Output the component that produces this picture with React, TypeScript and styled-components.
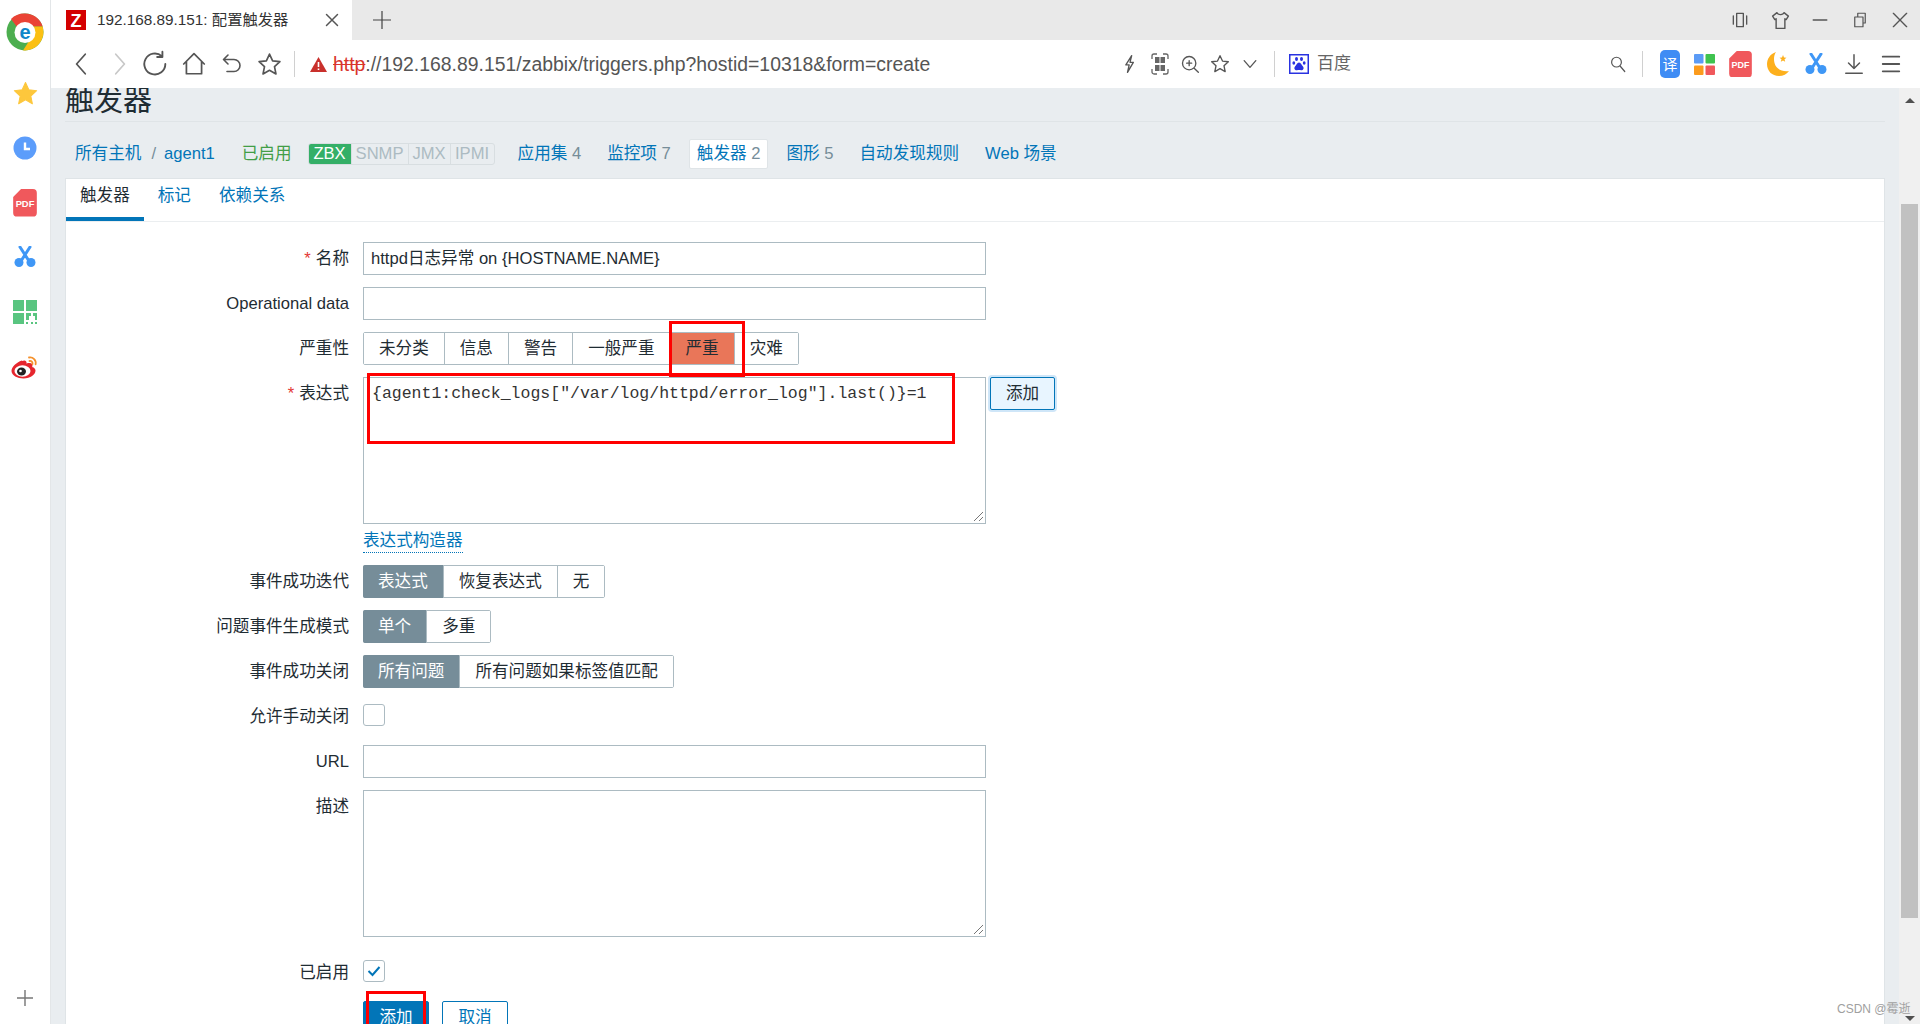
import styled, { createGlobalStyle } from 'styled-components';

const GlobalStyle = createGlobalStyle`
  html, body {
    margin: 0;
    padding: 0;
    height: 100%;
    overflow: hidden;
    background: #fff;
  }
  * {
    box-sizing: border-box;
  }
`;

const sans = `"Liberation Sans", "Noto Sans CJK SC", sans-serif`;

const Shell = styled.div`
  display: flex;
  width: 1920px;
  height: 1024px;
  overflow: hidden;
  font-family: ${sans};
  font-size: 16.6px;
  line-height: 20px;
  color: #1f2c33;
  position: relative;
`;
const SideBar = styled.aside`
  width: 51px;
  flex: none;
  background: #fff;
  border-right: 1px solid #e3e6e8;
  display: flex;
  flex-direction: column;
  align-items: center;
  padding-top: 13px;
`;
const SideIcon = styled.div<{ $h: number }>`
  height: ${(p) => p.$h}px;
  width: 100%;
  display: flex;
  align-items: center;
  justify-content: center;
`;
const SideBottom = styled.div`
  margin-top: auto;
  margin-bottom: 18px;
  display: flex;
`;
const Column = styled.div`
  flex: 1;
  min-width: 0;
  display: flex;
  flex-direction: column;
`;
const TabStrip = styled.div`
  height: 40px;
  flex: none;
  background: #e9e9e9;
  display: flex;
  align-items: center;
`;
const BrowserTab = styled.div`
  width: 301px;
  height: 40px;
  background: #fff;
  display: flex;
  align-items: center;
  padding-left: 15px;
  font-size: 15.3px;
  color: #333;
`;
const TabTitle = styled.span`
  margin-left: 11px;
  width: 224px;
  white-space: nowrap;
`;
const NewTab = styled.div`
  margin-left: 21px;
  display: flex;
`;
const WindowControls = styled.div`
  margin-left: auto;
  display: flex;
`;
const WindowBtn = styled.div`
  width: 40px;
  height: 40px;
  display: flex;
  align-items: center;
  justify-content: center;
`;
const Toolbar = styled.div`
  height: 48px;
  flex: none;
  background: #fff;
  display: flex;
  align-items: center;
  padding-left: 12px;
  padding-right: 10px;
`;
const NavSlot = styled.div<{ $w: number }>`
  width: ${(p) => p.$w}px;
  height: 30px;
  flex: none;
  display: flex;
  align-items: center;
  justify-content: center;
`;
const ToolSep = styled.div<{ $ml: number; $mr: number }>`
  width: 1px;
  height: 26px;
  flex: none;
  background: #d0d0d0;
  margin-left: ${(p) => p.$ml}px;
  margin-right: ${(p) => p.$mr}px;
`;
const UrlText = styled.div`
  width: 782px;
  flex: none;
  margin-left: 6px;
  font-size: 19.4px;
  color: #555;
  white-space: nowrap;
`;
const UrlScheme = styled.span`
  color: #d9352c;
  text-decoration: line-through;
`;
const SearchEngine = styled.div`
  display: flex;
  align-items: center;
  gap: 8px;
  font-size: 17px;
  color: #666;
`;
const RightTools = styled.div`
  margin-left: auto;
  display: flex;
  align-items: center;
`;
const Body = styled.div`
  flex: 1;
  min-height: 0;
  display: flex;
`;
const Main = styled.main`
  flex: 1;
  min-width: 0;
  overflow: hidden;
  background: #e9edf0;
  padding: 0 14px;
`;
const Heading = styled.h1`
  margin: -2px 0 0;
  height: 36px;
  font-size: 29px;
  line-height: 30px;
  font-weight: 400;
  color: #1f2c33;
  border-bottom: 1px solid #dfe4e7;
`;
const HostNav = styled.nav`
  height: 56px;
  display: flex;
  align-items: center;
  padding: 8px 0 0 10px;
  gap: 10px;
`;
const Crumb = styled.a`
  color: #0275b8;
`;
const CrumbSep = styled.span`
  color: #768d99;
  margin-right: -2px;
`;
const Enabled = styled.span`
  color: #429e47;
  margin-left: 17px;
`;
const Badges = styled.div`
  display: flex;
  height: 22px;
  margin-left: 6px;
  margin-right: 5px;
  border: 1px solid #d8dee1;
  border-radius: 3px;
  overflow: hidden;
`;
const Badge = styled.span<{ $on?: boolean; $w: number }>`
  width: ${(p) => p.$w}px;
  display: flex;
  align-items: center;
  justify-content: center;
  background: ${(p) => (p.$on ? '#34af67' : 'transparent')};
  color: ${(p) => (p.$on ? '#fff' : '#acbbc2')};
  border-left: ${(p) => (p.$on ? 'none' : '1px solid #d8dee1')};
  font-size: 16.6px;
`;
const HostLink = styled.a<{ $active?: boolean }>`
  height: 30px;
  display: block;
  line-height: 28px;
  padding: 0 7px;
  white-space: nowrap;
  color: #0275b8;
  background: ${(p) => (p.$active ? '#fff' : 'transparent')};
  border: 1px solid ${(p) => (p.$active ? '#dfe4e7' : 'transparent')};
  border-radius: 2px;
`;
const Count = styled.span`
  color: #768d99;
`;
const Card = styled.section`
  background: #fff;
  border: 1px solid #dfe4e7;
`;
const FormTabs = styled.div`
  height: 43px;
  display: flex;
  border-bottom: 1px solid #ebeef0;
`;
const FormTab = styled.a<{ $active?: boolean }>`
  height: 42px;
  padding: 0 14px 4px;
  display: flex;
  align-items: center;
  color: ${(p) => (p.$active ? '#1f2c33' : '#0275b8')};
  border-bottom: 4px solid ${(p) => (p.$active ? '#0275b8' : 'transparent')};
`;
const Form = styled.form`
  position: relative;
  display: flex;
  flex-direction: column;
  gap: 12px;
  padding: 20px 0 40px;
`;
const Row = styled.div<{ $mb?: number }>`
  display: flex;
  margin-bottom: ${(p) => p.$mb ?? 0}px;
`;
const Label = styled.label`
  width: 283px;
  flex: none;
  margin-right: 14px;
  height: 33px;
  line-height: 33px;
  text-align: right;
`;
const Req = styled.span`
  color: #e33734;
  margin-right: 5px;
`;
const TextInput = styled.div`
  width: 623px;
  height: 33px;
  border: 1px solid #acbbc2;
  padding: 0 7px;
  line-height: 31px;
  white-space: nowrap;
`;
const TextArea = styled.div<{ $h: number; $mono?: boolean }>`
  position: relative;
  width: 623px;
  height: ${(p) => p.$h}px;
  border: 1px solid #acbbc2;
  padding: 6px 8px;
  font-family: ${(p) => (p.$mono ? '"Liberation Mono", monospace' : 'inherit')};
  font-size: ${(p) => (p.$mono ? '16.5px' : '16.6px')};
  line-height: 19px;
  color: #333;
  white-space: nowrap;
`;
const ResizeGrip = styled.svg`
  position: absolute;
  right: 1px;
  bottom: 1px;
`;
const ExprLine = styled.div`
  display: flex;
  align-items: flex-start;
`;
const AddExpr = styled.button`
  margin-left: 4px;
  width: 65px;
  height: 33px;
  font: inherit;
  color: #1f2c33;
  background: #e8f5ff;
  border: 1px solid #0275b8;
  border-radius: 2px;
  box-shadow: 0 0 0 2px #cfe6f8;
`;
const BuilderLink = styled.a`
  display: inline-block;
  margin-top: 7px;
  height: 22px;
  line-height: 19px;
  color: #0275b8;
  border-bottom: 1px dotted #0275b8;
`;
const Segments = styled.div`
  display: flex;
  height: 33px;
  border: 1px solid #acbbc2;
  border-radius: 2px;
`;
const Segment = styled.span<{ $on?: boolean; $tone?: string }>`
  padding: 0 15px;
  display: flex;
  align-items: center;
  white-space: nowrap;
  background: ${(p) => p.$tone ?? (p.$on ? '#768d99' : '#fff')};
  color: ${(p) => (p.$on ? '#fff' : '#1f2c33')};
  margin: ${(p) => (p.$on ? '-1px 0 -1px -1px' : '0')};
  border-radius: ${(p) => (p.$on ? '2px 0 0 2px' : '0')};
  & + & {
    border-left: 1px solid #acbbc2;
  }
`;
const CheckBox = styled.div`
  width: 22px;
  height: 22px;
  margin-top: 4px;
  border: 1px solid #acbbc2;
  border-radius: 3px;
  display: flex;
  align-items: center;
  justify-content: center;
`;
const ButtonRow = styled.div`
  display: flex;
  gap: 13px;
  margin-left: 297px;
`;
const Button = styled.button<{ $primary?: boolean }>`
  width: 66px;
  height: 33px;
  font: inherit;
  color: ${(p) => (p.$primary ? '#fff' : '#0275b8')};
  background: ${(p) => (p.$primary ? '#0275b8' : '#fff')};
  border: 1px solid #0275b8;
  border-radius: 2px;
`;
const RedBox = styled.div<{ $x: number; $y: number; $w: number; $h: number }>`
  position: absolute;
  left: ${(p) => p.$x}px;
  top: ${(p) => p.$y}px;
  width: ${(p) => p.$w}px;
  height: ${(p) => p.$h}px;
  border: 3px solid #ff0000;
  pointer-events: none;
`;
const ScrollBar = styled.div`
  width: 21px;
  flex: none;
  background: #f0f0f0;
  display: flex;
  flex-direction: column;
  align-items: center;
`;
const ArrowUp = styled.div`
  margin-top: 10px;
  border-left: 5px solid transparent;
  border-right: 5px solid transparent;
  border-bottom: 5px solid #505050;
`;
const Thumb = styled.div`
  width: 17px;
  height: 714px;
  margin-top: 101px;
  background: #c1c1c1;
`;
const ArrowDown = styled.div`
  margin-top: auto;
  margin-bottom: 3px;
  border-left: 5px solid transparent;
  border-right: 5px solid transparent;
  border-top: 5px solid #505050;
`;
const Watermark = styled.div`
  position: absolute;
  left: 1837px;
  top: 1002px;
  font-size: 12px;
  line-height: 14px;
  color: #a0a0a0;
  white-space: nowrap;
`;

const stroke = { fill: 'none', stroke: '#555', strokeWidth: 1.6, strokeLinecap: 'round', strokeLinejoin: 'round' } as const;

const ELogo = () => (
  <svg width="38" height="38" viewBox="0 0 38 38">
    <circle cx="19" cy="19" r="18.5" fill="#4cae4f" />
    <path d="M19 .5a18.5 18.5 0 0 1 17.6 13H19a6 6 0 0 0-5.600 3.800L5 6A18.500 18.500 0 0 1 19 .5z" fill="#ea4335" />
    <path d="M36.600 13.500A18.500 18.500 0 0 1 17 37.400l7-11a8 8 0 0 0 1-12.900z" fill="#fbc013" />
    <circle cx="19" cy="19.500" r="10.500" fill="#fff" />
    <text x="19" y="26" textAnchor="middle" fontFamily="Liberation Sans" fontWeight="700" fontSize="20" fill="#0f86c9">e</text>
  </svg>
);
const StarIcon = () => (
  <svg width="25" height="25" viewBox="0 0 24 24">
    <path d="M12 1.500l3.200 6.900 7.500.9-5.600 5.100 1.500 7.500L12 18.100l-6.600 3.800 1.500-7.500L1.300 9.300l7.500-.9z" fill="#fdc73c" stroke="#fdc73c" strokeLinejoin="round" />
  </svg>
);
const ClockIcon = () => (
  <svg width="24" height="24" viewBox="0 0 24 24">
    <circle cx="12" cy="12" r="11.500" fill="#5c9dfb" />
    <path d="M12 6.500V13h5" fill="none" stroke="#fff" strokeWidth="2.400" />
  </svg>
);
const PdfIcon = ({ size = 24 }: { size?: number }) => (
  <svg width={size} height={size * 1.15} viewBox="0 0 24 28">
    <path d="M8 0h12a4 4 0 0 1 4 4v20a4 4 0 0 1-4 4H4a4 4 0 0 1-4-4V8z" fill="#f0585c" />
    <text x="12" y="18" textAnchor="middle" fontFamily="Liberation Sans" fontWeight="700" fontSize="9.500" fill="#fff">PDF</text>
  </svg>
);
const ScissorsIcon = ({ size = 22 }: { size?: number }) => (
  <svg width={size} height={size} viewBox="0 0 22 22">
    <path d="M6 1l9 14M16 1L7 15" stroke="#3f97f6" strokeWidth="3" strokeLinecap="round" />
    <circle cx="5" cy="16.500" r="4.500" fill="#3f97f6" />
    <circle cx="17" cy="16.500" r="4.500" fill="#3f97f6" />
  </svg>
);
const QrIcon = () => (
  <svg width="24" height="24" viewBox="0 0 24 24" fill="#59c580">
    <rect x="0" y="0" width="11" height="11" />
    <rect x="13" y="0" width="11" height="11" />
    <rect x="0" y="13" width="11" height="11" />
    <path d="M13 13h5v3h-2v4h-3zM20 13h4v7h-2v-4h-2zM13 22h2v2h-2zM18 22h2v2h-2zM22 22h2v2h-2z" />
  </svg>
);
const WeiboIcon = () => (
  <svg width="28" height="24" viewBox="0 0 28 24">
    <path d="M11 5.500C5 7.500.5 12 .5 16c0 4.500 6 7.500 12 7.500 7 0 12-4 12-8 0-2.600-2.600-3.300-3.300-3.600 1-2.700-.5-4-3.300-3.800-1.300 0-2.400.6-2.400.6.700-2.600-1.500-4.200-4.500-2.700z" fill="#e6262e" />
    <ellipse cx="11.500" cy="16" rx="8" ry="5.800" fill="#fff" />
    <ellipse cx="10.500" cy="16.500" rx="4.500" ry="4" fill="#222" />
    <circle cx="9.500" cy="16" r="1.300" fill="#fff" />
    <path d="M18 2.500c4-.8 7.500 2.700 6.600 6.800M18.500 6c2-.3 3.300 1 3 3" fill="none" stroke="#f5912c" strokeWidth="1.800" strokeLinecap="round" />
  </svg>
);
const PlusIcon = ({ size = 18, color = '#777', width = 1.6 }: { size?: number; color?: string; width?: number }) => (
  <svg width={size} height={size} viewBox="0 0 18 18">
    <path d="M9 0v18M0 9h18" stroke={color} strokeWidth={width} />
  </svg>
);
const ZFav = () => (
  <svg width="20" height="20" viewBox="0 0 20 20">
    <rect width="20" height="20" fill="#d40000" />
    <text x="10" y="16.500" textAnchor="middle" fontFamily="Liberation Sans" fontWeight="700" fontSize="18" fill="#fff">Z</text>
  </svg>
);
const Glyph = ({ d, size = 24, color, width }: { d: string; size?: number; color?: string; width?: number }) => (
  <svg width={size} height={size} viewBox="0 0 24 24">
    <path d={d} {...stroke} stroke={color ?? '#555'} strokeWidth={width ?? 1.6} />
  </svg>
);
const WarnIcon = () => (
  <svg width="17" height="15" viewBox="0 0 17 15">
    <path d="M8.500 0L17 15H0z" fill="#c9302c" />
    <path d="M8.500 5v5M8.500 11.500v1.500" stroke="#fff" strokeWidth="1.600" />
  </svg>
);
const BaiduIcon = () => (
  <svg width="20" height="20" viewBox="0 0 20 20">
    <rect x=".75" y=".75" width="18.500" height="18.500" fill="#fff" stroke="#2932e1" strokeWidth="1.500" />
    <g fill="#2932e1">
      <ellipse cx="7.500" cy="5" rx="1.500" ry="2" />
      <ellipse cx="12.500" cy="5" rx="1.500" ry="2" />
      <ellipse cx="4.800" cy="9" rx="1.400" ry="1.800" />
      <ellipse cx="15.200" cy="9" rx="1.400" ry="1.800" />
      <path d="M10 8.500c2 0 2.500 2.500 4 4 1.500 2 0 4-2 3.700-1.300-.2-2.600-.2-4 0-2 .3-3.500-1.700-2-3.700 1.500-1.500 2-4 4-4z" />
    </g>
  </svg>
);
const YiIcon = () => (
  <svg width="20" height="28" viewBox="0 0 20 28">
    <rect width="20" height="28" rx="5" fill="#3f8cf4" />
    <text x="10" y="20" textAnchor="middle" fontFamily="Noto Sans CJK SC" fontSize="15" fill="#fff">译</text>
  </svg>
);
const AppsIcon = () => (
  <svg width="21" height="21" viewBox="0 0 21 21">
    <rect width="9.500" height="9.500" rx="1" fill="#5b9bf6" />
    <rect x="11.500" width="9.500" height="9.500" rx="1" fill="#3fc34f" />
    <rect y="11.500" width="9.500" height="9.500" rx="1" fill="#fb9b1d" />
    <rect x="11.500" y="11.500" width="9.500" height="9.500" rx="1" fill="#f0585c" />
  </svg>
);
const MoonIcon = () => (
  <svg width="22" height="24" viewBox="0 0 22 24">
    <path d="M9 0C3 2 0 7 0 12c0 7 5 12 12 12 4 0 8-2 10-5-7 1-13-2-14.500-8C6.500 7 7 3 9 0z" fill="#fdb01d" />
    <path d="M16 3l1 2.500 2.500.2-2 1.600.7 2.500-2.200-1.400-2.200 1.400.7-2.500-2-1.600 2.500-.2z" fill="#fdb01d" />
  </svg>
);
const QrScanIcon = () => (
  <svg width="18" height="22" viewBox="0 0 18 22" fill="none">
    <path d="M1 6V3a2 2 0 0 1 2-2h3M12 1h3a2 2 0 0 1 2 2v3M17 16v3a2 2 0 0 1-2 2h-3M6 21H3a2 2 0 0 1-2-2v-3" stroke="#666" strokeWidth="1.300" />
    <g fill="#666">
      <rect x="4" y="4" width="4.500" height="6" />
      <rect x="9.500" y="4" width="4.500" height="6" />
      <rect x="4" y="12" width="4.500" height="6" />
      <rect x="9.500" y="12" width="4.500" height="6" />
    </g>
  </svg>
);

function App() {
  return (
    <>
      <GlobalStyle />
      <Shell>
        <SideBar>
          <ELogo />
          <SideIcon $h={85}>
            <StarIcon />
          </SideIcon>
          <SideIcon $h={23}>
            <ClockIcon />
          </SideIcon>
          <SideIcon $h={88}>
            <PdfIcon />
          </SideIcon>
          <SideIcon $h={20}>
            <ScissorsIcon />
          </SideIcon>
          <SideIcon $h={90}>
            <QrIcon />
          </SideIcon>
          <SideIcon $h={20}>
            <WeiboIcon />
          </SideIcon>
          <SideBottom>
            <PlusIcon size={16} />
          </SideBottom>
        </SideBar>
        <Column>
          <TabStrip>
            <BrowserTab>
              <ZFav />
              <TabTitle>192.168.89.151: 配置触发器</TabTitle>
              <Glyph d="M6 6l12 12M18 6L6 18" size={22} />
            </BrowserTab>
            <NewTab>
              <PlusIcon size={18} color="#444" width={1.2} />
            </NewTab>
            <WindowControls>
              <WindowBtn>
                <Glyph d="M8 4h8v16H8zM4 7v10M20 7v10" size={20} />
              </WindowBtn>
              <WindowBtn>
                <Glyph d="M8 3L3 7l2.500 4L7 10v11h10V10l1.500 1L21 7l-5-4c-1 3-7 3-8 0z" size={21} />
              </WindowBtn>
              <WindowBtn>
                <Glyph d="M4 12h16" size={20} width={2} />
              </WindowBtn>
              <WindowBtn>
                <Glyph d="M5 8h11v13H5zM9 8V3h10v13h-3" size={18} />
              </WindowBtn>
              <WindowBtn>
                <Glyph d="M4 4l16 16M20 4L4 20" size={20} />
              </WindowBtn>
            </WindowControls>
          </TabStrip>
          <Toolbar>
            <NavSlot $w={37}>
              <Glyph d="M15 3L7 12l8 9" size={26} />
            </NavSlot>
            <NavSlot $w={37}>
              <Glyph d="M9 3l8 9-8 9" size={26} color="#c8c8c8" />
            </NavSlot>
            <NavSlot $w={38}>
              <Glyph d="M20 12a9 9 0 1 1-3-6.700M17.500 1.500v4.500H13" size={28} />
            </NavSlot>
            <NavSlot $w={38}>
              <Glyph d="M2.500 12L12 2.500 21.500 12M5 10v11h14V10" size={26} />
            </NavSlot>
            <NavSlot $w={38}>
              <Glyph d="M8 3L3.500 7.500 8 12M4 7.500h10a6 6 0 0 1 0 12H7" size={24} />
            </NavSlot>
            <NavSlot $w={36}>
              <Glyph d="M12 2l3 6.500 7 .8-5.200 4.800 1.400 7L12 17.600l-6.200 3.500 1.400-7L2 9.300l7-.8z" size={25} />
            </NavSlot>
            <ToolSep $ml={7} $mr={15} />
            <WarnIcon />
            <UrlText>
              <UrlScheme>http</UrlScheme>://192.168.89.151/zabbix/triggers.php?hostid=10318&amp;form=create
            </UrlText>
            <NavSlot $w={30}>
              <Glyph d="M14 2L7 13h4l-2 9 7-12h-4z" size={20} />
            </NavSlot>
            <NavSlot $w={30}>
              <QrScanIcon />
            </NavSlot>
            <NavSlot $w={30}>
              <Glyph d="M11 3a8 8 0 1 1 0 16 8 8 0 0 1 0-16zM17 17l5 5M11 8v6M8 11h6" size={20} />
            </NavSlot>
            <NavSlot $w={30}>
              <Glyph d="M12 2l3 6.500 7 .8-5.200 4.800 1.400 7L12 17.600l-6.200 3.500 1.400-7L2 9.300l7-.8z" size={20} />
            </NavSlot>
            <NavSlot $w={30}>
              <Glyph d="M5 8l7 8 7-8" size={20} />
            </NavSlot>
            <ToolSep $ml={9} $mr={14} />
            <SearchEngine>
              <BaiduIcon />
              百度
            </SearchEngine>
            <RightTools>
              <NavSlot $w={24}>
                <Glyph d="M10 3a6.500 6.500 0 1 1 0 13 6.500 6.500 0 0 1 0-13zM15 15l6 7" size={18} />
              </NavSlot>
              <ToolSep $ml={12} $mr={10} />
              <NavSlot $w={34}>
                <YiIcon />
              </NavSlot>
              <NavSlot $w={35}>
                <AppsIcon />
              </NavSlot>
              <NavSlot $w={37}>
                <PdfIcon size={23} />
              </NavSlot>
              <NavSlot $w={37}>
                <MoonIcon />
              </NavSlot>
              <NavSlot $w={39}>
                <ScissorsIcon />
              </NavSlot>
              <NavSlot $w={37}>
                <Glyph d="M12 2v15M6 11l6 6 6-6M3 22h18" size={22} />
              </NavSlot>
              <NavSlot $w={38}>
                <Glyph d="M3 4h18M3 12h18M3 20h18" size={22} width={2} />
              </NavSlot>
            </RightTools>
          </Toolbar>
          <Body>
            <Main>
              <Heading>触发器</Heading>
              <HostNav>
                <Crumb>所有主机</Crumb>
                <CrumbSep>/</CrumbSep>
                <Crumb>agent1</Crumb>
                <Enabled>已启用</Enabled>
                <Badges>
                  <Badge $on $w={42}>ZBX</Badge>
                  <Badge $w={57}>SNMP</Badge>
                  <Badge $w={42}>JMX</Badge>
                  <Badge $w={44}>IPMI</Badge>
                </Badges>
                <HostLink>
                  应用集 <Count>4</Count>
                </HostLink>
                <HostLink>
                  监控项 <Count>7</Count>
                </HostLink>
                <HostLink $active>
                  触发器 <Count>2</Count>
                </HostLink>
                <HostLink>
                  图形 <Count>5</Count>
                </HostLink>
                <HostLink>自动发现规则</HostLink>
                <HostLink>Web 场景</HostLink>
              </HostNav>
              <Card>
                <FormTabs>
                  <FormTab $active>触发器</FormTab>
                  <FormTab>标记</FormTab>
                  <FormTab>依赖关系</FormTab>
                </FormTabs>
                <Form>
                  <Row>
                    <Label>
                      <Req>*</Req>名称
                    </Label>
                    <TextInput>httpd日志异常 on {'{HOSTNAME.NAME}'}</TextInput>
                  </Row>
                  <Row>
                    <Label>Operational data</Label>
                    <TextInput />
                  </Row>
                  <Row>
                    <Label>严重性</Label>
                    <Segments>
                      <Segment>未分类</Segment>
                      <Segment>信息</Segment>
                      <Segment>警告</Segment>
                      <Segment>一般严重</Segment>
                      <Segment $tone="#e97659">严重</Segment>
                      <Segment>灾难</Segment>
                    </Segments>
                  </Row>
                  <Row>
                    <Label>
                      <Req>*</Req>表达式
                    </Label>
                    <div>
                      <ExprLine>
                        <TextArea $h={147} $mono>
                          {'{agent1:check_logs["/var/log/httpd/error_log"].last()}=1'}
                          <ResizeGrip width="12" height="12" viewBox="0 0 12 12">
                            <path d="M11 2L2 11M11 7l-4 4" stroke="#777" strokeWidth="1" />
                          </ResizeGrip>
                        </TextArea>
                        <AddExpr type="button">添加</AddExpr>
                      </ExprLine>
                      <BuilderLink>表达式构造器</BuilderLink>
                    </div>
                  </Row>
                  <Row>
                    <Label>事件成功迭代</Label>
                    <Segments>
                      <Segment $on>表达式</Segment>
                      <Segment>恢复表达式</Segment>
                      <Segment>无</Segment>
                    </Segments>
                  </Row>
                  <Row>
                    <Label>问题事件生成模式</Label>
                    <Segments>
                      <Segment $on>单个</Segment>
                      <Segment>多重</Segment>
                    </Segments>
                  </Row>
                  <Row>
                    <Label>事件成功关闭</Label>
                    <Segments>
                      <Segment $on>所有问题</Segment>
                      <Segment>所有问题如果标签值匹配</Segment>
                    </Segments>
                  </Row>
                  <Row>
                    <Label>允许手动关闭</Label>
                    <CheckBox />
                  </Row>
                  <Row>
                    <Label>URL</Label>
                    <TextInput />
                  </Row>
                  <Row $mb={7}>
                    <Label>描述</Label>
                    <TextArea $h={147}>
                      <ResizeGrip width="12" height="12" viewBox="0 0 12 12">
                        <path d="M11 2L2 11M11 7l-4 4" stroke="#777" strokeWidth="1" />
                      </ResizeGrip>
                    </TextArea>
                  </Row>
                  <Row>
                    <Label>已启用</Label>
                    <CheckBox>
                      <svg width="14" height="12" viewBox="0 0 14 12">
                        <path d="M1.500 6l4 4 7-8" fill="none" stroke="#0275b8" strokeWidth="2" />
                      </svg>
                    </CheckBox>
                  </Row>
                  <ButtonRow>
                    <Button type="button" $primary>添加</Button>
                    <Button type="button">取消</Button>
                  </ButtonRow>
                  <RedBox $x={603} $y={99} $w={76} $h={56} />
                  <RedBox $x={301} $y={151} $w={588} $h={71} />
                  <RedBox $x={300} $y={769} $w={60} $h={60} />
                </Form>
              </Card>
            </Main>
            <ScrollBar>
              <ArrowUp />
              <Thumb />
              <ArrowDown />
            </ScrollBar>
          </Body>
        </Column>
        <Watermark>CSDN @霉逝</Watermark>
      </Shell>
    </>
  );
}

export default App;
